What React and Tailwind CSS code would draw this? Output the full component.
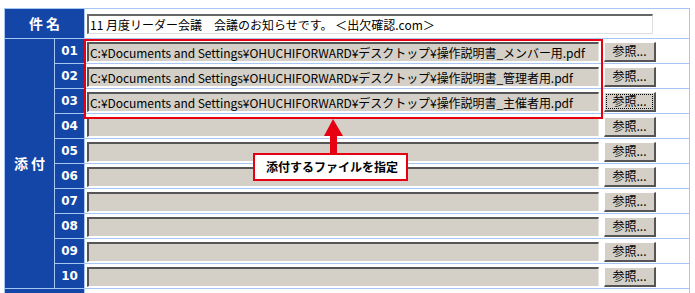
const files = [
  'C:¥Documents and Settings¥OHUCHIFORWARD¥デスクトップ¥操作説明書_メンバー用.pdf',
  'C:¥Documents and Settings¥OHUCHIFORWARD¥デスクトップ¥操作説明書_管理者用.pdf',
  'C:¥Documents and Settings¥OHUCHIFORWARD¥デスクトップ¥操作説明書_主催者用.pdf',
  '', '', '', '', '', '', '',
];

const jp = { fontFamily: '"Noto Sans CJK JP", "Noto Sans", sans-serif' };

function FileRow({ value, focused }) {
  return (
    <div className="bg-white flex items-center pl-[2px] pt-px gap-[5px]">
      <div
        className="w-[512px] h-[20px] bg-[#d4d0c8] border-t-2 border-l-2 border-t-[#555] border-l-[#555] border-b border-r border-b-white border-r-[#e8e6e0] text-[12px] leading-[17px] pl-[1px] text-black whitespace-nowrap overflow-hidden tracking-[-0.05px]"
        style={jp}
      >
        {value}
      </div>
      <button
        className="w-[52px] h-[20px] bg-[#d4d0c8] border-t border-l border-t-white border-l-white border-b-2 border-r-2 border-b-[#555] border-r-[#555] text-[12px] leading-none text-black flex items-center justify-center p-[1px]"
        style={jp}
      >
        <span className={focused ? 'w-full h-full flex items-center justify-center border border-dotted border-black' : 'flex items-center justify-center'}>
          参照...
        </span>
      </button>
    </div>
  );
}

export default function App() {
  return (
    <div className="relative w-[695px] h-[293px] bg-white overflow-hidden pl-[4px] pt-[8px]">
      <div className="w-[686px] bg-[#a6c6f4] p-px grid grid-cols-[49px_29px_604px] grid-rows-[29px_repeat(11,24px)] gap-px">
        <div className="col-span-2 bg-[#1446a8] flex items-center justify-center text-white font-bold text-[14px] tracking-[3px] pl-[3px]" style={jp}>
          件名
        </div>
        <div className="bg-white flex items-center pl-[2px] pt-[1px]">
          <div
            className="w-[566px] h-[20px] bg-white border-t-2 border-l-2 border-t-[#666] border-l-[#666] border-b border-r border-b-[#ddd] border-r-[#ddd] text-[12px] leading-[17px] pl-[1px] text-black whitespace-nowrap"
            style={jp}
          >
            11 月度リーダー会議　会議のお知らせです。 ＜出欠確認.com＞
          </div>
        </div>

        <div className="row-span-10 bg-[#1446a8] flex items-center justify-center text-white font-bold text-[14px] tracking-[3px] pl-[3px]" style={jp}>
          添付
        </div>
        {files.map((f, i) => (
          <div key={i} className="contents">
            <div
              className="bg-[#1446a8] flex items-center justify-center text-white font-bold text-[12px]"
              style={{ fontFamily: '"DejaVu Sans", Verdana, sans-serif' }}
            >
              {String(i + 1).padStart(2, '0')}
            </div>
            <FileRow value={f} focused={i === 2} />
          </div>
        ))}

        <div className="col-span-2 bg-[#1446a8]"></div>
        <div className="bg-white"></div>
      </div>

      {/* red highlight around the chosen files */}
      <div className="absolute left-[84px] top-[39px] w-[519px] h-[80px] border-2 border-[#e60012] pointer-events-none"></div>

      {/* arrow */}
      <svg className="absolute left-[320px] top-[118px]" width="28" height="36" viewBox="0 0 28 36">
        <polygon points="13,1 23,18 17,18 17,36 10,36 10,18 4,18" fill="#e60012" />
      </svg>

      {/* callout */}
      <div
        className="absolute left-[253px] top-[153px] w-[155px] h-[28px] bg-white border-2 border-[#e60012] flex items-center pl-[11px] text-black font-bold text-[12px]"
        style={jp}
      >
        添付するファイルを指定
      </div>
    </div>
  );
}
